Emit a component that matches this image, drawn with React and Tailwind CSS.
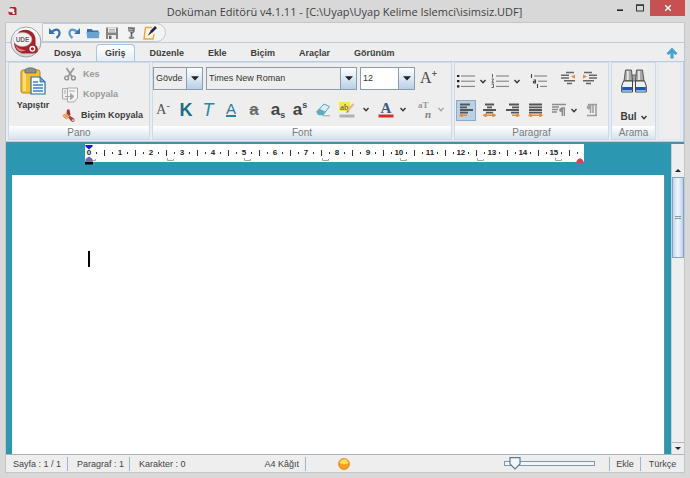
/**
 * Doküman Editörü: ana pencere, şerit menü, cetvel ve durum çubuğu.
 */

import React, { useState } from 'react';

const TABS = ['Dosya', 'Giriş', 'Düzenle', 'Ekle', 'Biçim', 'Araçlar', 'Görünüm'];
const CENTIMETERS = Array.from({ length: 16 }, (_, i) => i);
const TAB_STOPS = [0, 1, 2, 3, 4, 5, 6];

/* ---------- Ortak parçalar ---------- */

function Chevron({ muted }) {
  return (
    <svg viewBox="0 0 6 5" className="h-[5px] w-[6px] shrink-0" fill="none">
      <path d="M0.5 1 L3 3.7 L5.5 1" stroke={muted ? '#a5a5a5' : '#333'} strokeWidth="1.4" />
    </svg>
  );
}

function IconButton({ label, className = '', children }) {
  return (
    <button type="button" aria-label={label} title={label} className={`flex shrink-0 items-center justify-center ${className}`}>
      {children}
    </button>
  );
}

function Combo({ label, options, className = '', fieldClass = 'bg-[#eeeeee]' }) {
  return (
    <div className={`relative h-[23px] border border-[#8a9db0] ${className}`}>
      <select
        aria-label={label}
        className={`block h-full w-full appearance-none truncate pr-4 pl-[2px] text-[9px] leading-3 text-[#333] outline-none ${fieldClass}`}
      >
        {options.map((option) => (
          <option key={option}>{option}</option>
        ))}
      </select>
      <span className="pointer-events-none absolute inset-y-0 right-0 flex w-4 items-center justify-center border-l border-[#8a9db0] bg-linear-to-b from-[#fdfeff] via-[#dce8f4] to-[#b9cfe5]">
        <svg viewBox="0 0 8 5" className="h-[5px] w-2">
          <path d="M0 0.3 H8 L4 4.6 Z" fill="#222" />
        </svg>
      </span>
    </div>
  );
}

function Group({ title, className = '', children }) {
  return (
    <section aria-label={title} className={`flex shrink-0 flex-col border border-[#cddbe9] bg-[#eeeeee] ${className}`}>
      <div className="flex h-[63px] flex-col">{children}</div>
      <h2 className="h-[13px] bg-linear-to-b from-white to-[#d9e2ee] text-center text-[10px] leading-[13px] text-[#7b7b7b]">{title}</h2>
    </section>
  );
}

/* ---------- Üst kısım ---------- */

function TitleBar() {
  return (
    <header className="flex h-[22px] shrink-0 items-start pl-2">
      <svg viewBox="0 0 10 10" className="mt-[6px] h-[10px] w-[10px]">
        <path d="M2 1 H7 Q8.5 1 8.5 3 V9 H3 Q0.5 9 0.5 6.5 Z" fill="#b31f2c" />
        <ellipse cx="3.4" cy="4.2" rx="3" ry="2" fill="#f4e9e9" />
        <circle cx="5.6" cy="7" r="1.2" fill="#fff" />
      </svg>
      <h1 className="min-w-0 flex-1 truncate pl-[61px] text-center font-['Open_Sans','Noto_Sans',sans-serif] text-[11px] leading-6 text-[#3f3f3f]">
        Doküman Editörü v4.1.11 - [C:\Uyap\Uyap Kelime Islemci\isimsiz.UDF]
      </h1>
      <div className="flex pr-[5px]">
        <IconButton label="Simge durumuna küçült" className="h-4 w-5">
          <svg viewBox="0 0 8 8" className="h-2 w-2"><path d="M1 6.2 H7" stroke="#222" strokeWidth="1.6" /></svg>
        </IconButton>
        <IconButton label="Ekranı kapla" className="h-4 w-5">
          <svg viewBox="0 0 8 8" className="h-2 w-2">
            <rect x="0.5" y="1" width="7" height="6" fill="none" stroke="#333" />
            <path d="M0 1.2 H8" stroke="#333" strokeWidth="1.4" />
          </svg>
        </IconButton>
        <IconButton label="Kapat" className="h-4 w-[35px] bg-[#c75050]">
          <svg viewBox="0 0 8 8" className="h-2 w-2"><path d="M1.2 1.2 L6.8 6.8 M6.8 1.2 L1.2 6.8" stroke="#fff" strokeWidth="1.5" /></svg>
        </IconButton>
      </div>
    </header>
  );
}

function AppOrb() {
  return (
    <button type="button" aria-label="UDE" className="absolute top-[3px] left-1 z-10 h-8 w-8">
      <svg viewBox="0 0 32 32" className="h-8 w-8">
        <defs>
          <linearGradient id="orbFill" x1="0" y1="0" x2="0" y2="1">
            <stop offset="0" stopColor="#ffffff" />
            <stop offset="0.6" stopColor="#eceef0" />
            <stop offset="1" stopColor="#cfd3d8" />
          </linearGradient>
        </defs>
        <circle cx="16" cy="16" r="15" fill="url(#orbFill)" stroke="#98a1ac" />
        <path d="M9 5.5 Q16 2 22 6 Q25.5 9 25.5 14 V19 Q29 22 27.5 25.5 Q26 28 22 27.5 H12 Q4.5 25 4 17 Z" fill="#a5222b" />
        <path d="M5 19 Q9 24 16 24 Q12 26.5 8.5 24.5 Q6 22.5 5 19 Z" fill="#d8878b" />
        <ellipse cx="12.5" cy="13.5" rx="9.3" ry="7" fill="#f6f3f3" stroke="#c5b5b6" strokeWidth="0.6" />
        <text x="12.5" y="16" textAnchor="middle" fontSize="6.5" fontWeight="bold" fill="#666" fontFamily="Liberation Sans, sans-serif">UDE</text>
        <circle cx="22.4" cy="22.8" r="2.3" fill="#a5222b" stroke="#fff" strokeWidth="1.4" />
      </svg>
    </button>
  );
}

function QuickAccess() {
  return (
    <div className="flex h-5 shrink-0 border-b border-[#c3cad2]">
      <div className="ml-9 flex items-center gap-[5px] rounded-r-full border border-[#c6c9cf] bg-[#f3f3f4] pr-2 pl-[5px]">
        <IconButton label="Geri al" className="h-[14px] w-[14px]">
          <svg viewBox="0 0 14 14" className="h-[14px] w-[14px]">
            <path d="M4 5.5 Q10 1.5 11.5 6 Q12 9.5 8.5 12" fill="none" stroke="#3572ae" strokeWidth="2.2" />
            <path d="M1 2 V8 H7 Z" fill="#3572ae" />
          </svg>
        </IconButton>
        <IconButton label="Yinele" className="h-[14px] w-[14px]">
          <svg viewBox="0 0 14 14" className="h-[14px] w-[14px]">
            <path d="M10 5.5 Q4 1.5 2.5 6 Q2 9.5 5.5 12" fill="none" stroke="#5a9acb" strokeWidth="2.2" />
            <path d="M13 2 V8 H7 Z" fill="#3572ae" />
          </svg>
        </IconButton>
        <IconButton label="Aç" className="h-[14px] w-[14px]">
          <svg viewBox="0 0 14 14" className="h-[14px] w-[14px]">
            <path d="M1 3 H5.5 L7 4.5 H12.5 V12 H1 Z" fill="#3f6f9e" />
            <path d="M0.5 6 H13.5 L12.8 12.3 H1.2 Z" fill="#6ba2d3" />
          </svg>
        </IconButton>
        <IconButton label="Kaydet" className="h-[14px] w-[14px]">
          <svg viewBox="0 0 14 14" className="h-[14px] w-[14px]">
            <path d="M1 1.5 H13 V13 H1 Z" fill="#858585" />
            <rect x="3" y="1.5" width="8" height="5" fill="#e9e9e9" />
            <path d="M4 3.5 H10 M4 5 H10" stroke="#999" strokeWidth="0.7" />
            <rect x="3" y="9" width="8" height="4" fill="#ededed" />
            <rect x="4" y="9.7" width="2.4" height="3.3" fill="#666" />
          </svg>
        </IconButton>
        <IconButton label="İmzala" className="h-[14px] w-[14px]">
          <svg viewBox="0 0 14 14" className="h-[14px] w-[14px]">
            <path d="M4 1 L11 1.5 L10.5 6 L8.5 7.5 L4.5 5.5 Z" fill="#707070" />
            <path d="M5 3 L9 4 M5 5 L9 6" stroke="#c9c9c9" strokeWidth="0.8" />
            <path d="M7.5 6 V11" stroke="#5a5a5a" strokeWidth="1.6" />
            <ellipse cx="7.5" cy="11.8" rx="3" ry="1.3" fill="#8a8a8a" />
          </svg>
        </IconButton>
        <IconButton label="Düzenle" className="h-[14px] w-[14px]">
          <svg viewBox="0 0 14 14" className="h-[14px] w-[14px]">
            <path d="M9 1.5 H2.5 L1 13 H10 L11 8" fill="#fff6e3" stroke="#eda546" strokeWidth="1.4" />
            <path d="M13 1 L8 6" stroke="#1f2547" strokeWidth="2.6" />
            <path d="M7.5 5 L9 6.8 L4.5 10 Z" fill="#333" />
          </svg>
        </IconButton>
      </div>
    </div>
  );
}

function TabBar({ active, onSelect }) {
  return (
    <nav className="flex h-[18px] shrink-0 items-end gap-[6px] pr-[5px] pl-[39px]">
      {TABS.map((tab) => (
        <button
          key={tab}
          type="button"
          onClick={() => onSelect(tab)}
          className={`h-[17px] px-2 text-[9px] leading-4 font-bold text-[#3c3c3c] ${
            tab === active
              ? 'rounded-t-sm border border-b-0 border-[#a9c4df] bg-linear-to-b from-white to-[#e6edf5]'
              : 'border border-b-0 border-transparent'
          }`}
        >
          {tab}
        </button>
      ))}
      <IconButton label="Şeridi gizle" className="ml-auto h-4 w-[14px]">
        <svg viewBox="0 0 12 12" className="h-3 w-3"><path d="M6 0.5 L11.5 6.5 L9.5 8 L7.6 6.3 V11.5 H4.4 V6.3 L2.5 8 L0.5 6.5 Z" fill="#46a3cd" /></svg>
      </IconButton>
    </nav>
  );
}

/* ---------- Şerit ---------- */

function ClipboardGroup() {
  return (
    <Group title="Pano" className="w-[142px]">
      <div className="flex h-full">
        <button type="button" className="flex w-12 shrink-0 flex-col items-center pt-1 text-[9px] leading-3 font-bold text-[#3c3c3c]">
          <svg viewBox="0 0 26 28" className="mb-1 h-7 w-[26px]">
            <rect x="1" y="3" width="19" height="23" rx="2" fill="#f4bf2b" stroke="#b98516" />
            <path d="M3 5 H6 V24 H3 Z" fill="#fbdc78" />
            <path d="M5 2.5 Q10.5 -1 16 2.5 V6 H5 Z" fill="#8d8d8d" stroke="#5a5a5a" strokeWidth="0.7" />
            <path d="M11 10 H20 L25 15 V27 H11 Z" fill="#f5faff" stroke="#2d6ba5" strokeWidth="1.2" />
            <path d="M20 10 V15 H25 Z" fill="#6ba6d8" stroke="#2d6ba5" strokeWidth="0.8" />
            <path d="M13 15 H18 M13 18 H23 M13 21 H23 M13 24 H23" stroke="#3c83c2" strokeWidth="1.6" />
          </svg>
          Yapıştır
        </button>
        <div className="flex flex-col pt-px text-[9px] font-bold text-[#3c3c3c]">
          <button type="button" className="flex h-[21px] items-center gap-[5px] pl-[5px] text-[#9a9a9a]">
            <svg viewBox="0 0 16 14" className="h-[14px] w-4">
              <path d="M4.5 1 L10 9.5 M12 1 L6 9.5" stroke="#9b9b9b" strokeWidth="1.8" />
              <circle cx="4.6" cy="11" r="1.9" fill="none" stroke="#8e8e8e" strokeWidth="1.4" />
              <circle cx="11.4" cy="11" r="1.9" fill="none" stroke="#8e8e8e" strokeWidth="1.4" />
            </svg>
            Kes
          </button>
          <button type="button" className="flex h-[21px] items-center gap-[5px] pl-[5px] text-[#9a9a9a]">
            <svg viewBox="0 0 16 16" className="h-4 w-4" fill="none" stroke="#aaa">
              <path d="M0.5 1.5 H9 V12 H0.5 Z" fill="#efefef" />
              <path d="M5.5 1 H15.5 V11 L12 15 H5.5 Z" fill="#f4f4f4" />
              <path d="M2 4 H4 M2 6 H4 M7 4 H13 M3 9.5 H9" />
              <path d="M8.5 6.5 L12 9.5 L8.5 12.5 Z" fill="#a3a3a3" />
            </svg>
            Kopyala
          </button>
          <button type="button" className="flex h-[21px] items-center gap-1 pl-1 whitespace-nowrap">
            <svg viewBox="0 0 16 14" className="h-[14px] w-4">
              <path d="M6 0.5 L8.5 0.5 L9.5 6 L7 7.5 L5.5 4 Z" fill="#a4312a" />
              <path d="M1 6 L5 4 L9 8 L5.5 10.5 Z" fill="#e9b27c" />
              <path d="M2 7 L5.5 10 M4 5.5 L7.5 9" stroke="#c97f55" strokeWidth="0.8" />
              <path d="M8.5 6.5 L13 9.5 Q14.5 12 12 13 Q10.5 13 7.5 9 Z" fill="#a9473a" />
              <circle cx="12" cy="11.2" r="0.9" fill="#f0dcd5" />
            </svg>
            Biçim Kopyala
          </button>
        </div>
      </div>
    </Group>
  );
}

function FontGroup() {
  return (
    <Group title="Font" className="w-[300px]">
      <div className="flex h-[30px] items-center gap-[3px]">
        <Combo label="Stil" options={['Gövde']} className="w-[50px]" />
        <Combo label="Yazı tipi" options={['Times New Roman']} className="w-[151px]" />
        <Combo label="Boyut" options={['12']} className="w-[55px]" fieldClass="bg-white" />
        <IconButton label="Yazı tipini büyüt" className="ml-[2px] font-['Liberation_Serif',serif] text-[16px] leading-5 text-[#444]">
          A<span className="-mt-2 text-[10px] leading-3 font-bold">+</span>
        </IconButton>
      </div>
      <div className="flex h-[33px] items-center pl-[3px]">
        <IconButton label="Yazı tipini küçült" className="w-[14px] font-['Liberation_Serif',serif] text-[14px] leading-5 text-[#555]">
          A<span className="-mt-2 text-[10px] leading-3">-</span>
        </IconButton>
        <IconButton label="Kalın" className="ml-[9px] w-[14px] text-[18px] leading-5 font-bold text-[#14708a]">K</IconButton>
        <IconButton label="İtalik" className="ml-2 w-[14px] text-[18px] leading-5 text-[#2b87a2] italic">T</IconButton>
        <IconButton label="Altı çizili" className="ml-[9px] w-[14px]">
          <span className="border-b-2 border-[#2b7f9c] text-[15px] leading-[13px] text-[#2b7f9c]">A</span>
        </IconButton>
        <IconButton label="Üstü çizili" className="ml-[9px] w-[14px] text-[17px] leading-5 font-bold text-[#6b6b6b] line-through">a</IconButton>
        <IconButton label="Alt simge" className="ml-2 w-[18px] text-[17px] leading-5 font-bold text-[#444]">
          a<span className="mt-3 text-[9px] leading-[9px]">s</span>
        </IconButton>
        <IconButton label="Üst simge" className="ml-1 w-[18px] text-[17px] leading-5 font-bold text-[#444]">
          a<span className="-mt-2 text-[9px] leading-[9px]">s</span>
        </IconButton>
        <IconButton label="Biçimi temizle" className="ml-[6px] w-4">
          <svg viewBox="0 0 16 14" className="h-[14px] w-4">
            <path d="M9 1 L14.5 3.5 L8 12 L1.5 9 Z" fill="#d9edf2" stroke="#5fa3b6" />
            <path d="M1.5 9 L4.5 5.8 L10.5 8.8 L8 12.5 L3 12 Z" fill="#5eacc0" />
            <path d="M8 12.8 H15" stroke="#8fa9b0" />
          </svg>
        </IconButton>
        <IconButton label="Vurgu rengi" className="ml-2 gap-2">
          <svg viewBox="0 0 16 18" className="h-[18px] w-4">
            <rect x="0" y="1" width="11" height="9" fill="#f6e945" />
            <text x="1" y="8.6" fontSize="9" fill="#444" fontFamily="Liberation Serif, serif">ab</text>
            <path d="M14.5 3 L8 10.5" stroke="#e2b88d" strokeWidth="2.2" />
            <path d="M8.8 9.5 L7 12 L9.8 11 Z" fill="#777" />
            <rect x="0.5" y="13.5" width="15" height="3" fill="#b1b1b1" />
          </svg>
          <Chevron />
        </IconButton>
        <IconButton label="Yazı rengi" className="ml-[9px] gap-[6px]">
          <svg viewBox="0 0 16 18" className="h-[18px] w-4">
            <text x="8" y="12" textAnchor="middle" fontSize="15" fontWeight="bold" fill="#3c5a80" fontFamily="Liberation Serif, serif">A</text>
            <rect x="0.5" y="13.5" width="15" height="3" fill="#d2302b" />
          </svg>
          <Chevron />
        </IconButton>
        <IconButton label="Metin efektleri" className="ml-[10px] gap-1">
          <svg viewBox="0 0 18 24" className="h-6 w-[18px]" fontFamily="Liberation Serif, serif" fontWeight="bold">
            <text x="2" y="10" fontSize="9" fill="#999">aT</text>
            <text x="9" y="20" fontSize="11" fontStyle="italic" fill="#808080">n</text>
          </svg>
          <Chevron muted />
        </IconButton>
      </div>
    </Group>
  );
}

function AlignIcon({ lines, arrow }) {
  return (
    <svg viewBox="0 0 15 14" className="h-[14px] w-[15px]" fill="none">
      <path d={lines} stroke="#555" strokeWidth="1.8" />
      <path d={arrow} stroke="#e38b3e" strokeWidth="1.5" />
    </svg>
  );
}

const ALIGNMENTS = [
  { label: 'Sola hizala', lines: 'M1 1.5 H11 M1 4.3 H8 M1 7 H14 M1 9.6 H9', arrow: 'M1 12.3 H8 M3.5 10.5 L1.2 12.3 L3.5 14' },
  { label: 'Ortala', lines: 'M3 1.5 H12 M5 4.3 H10 M1 7 H14 M4 9.6 H11', arrow: 'M2 12.3 H13 M4.5 10.5 L2 12.3 L4.5 14 M10.5 10.5 L13 12.3 L10.5 14' },
  { label: 'Sağa hizala', lines: 'M4 1.5 H14 M7 4.3 H14 M1 7 H14 M6 9.6 H14', arrow: 'M7 12.3 H14 M11.5 10.5 L13.8 12.3 L11.5 14' },
  { label: 'İki yana yasla', lines: 'M1 1.5 H14 M1 4.3 H14 M1 7 H14 M1 9.6 H14', arrow: 'M1 12.3 H14 M3.5 10.5 L1.2 12.3 L3.5 14 M11.5 10.5 L13.8 12.3 L11.5 14' },
];

function ParagraphGroup() {
  const [align, setAlign] = useState('Sola hizala');

  return (
    <Group title="Paragraf" className="w-[155px]">
      <div className="flex h-8 items-center pt-1 pl-[2px]">
        <IconButton label="Madde işaretleri" className="gap-[5px]">
          <svg viewBox="0 0 18 14" className="h-[14px] w-[18px]">
            <path d="M0 2 H2.4 M0 7.2 H2.4 M0 12.4 H2.4" stroke="#222" strokeWidth="2.2" />
            <path d="M4 2 H18 M4 7.2 H18 M4 12.4 H18" stroke="#777" />
          </svg>
          <Chevron />
        </IconButton>
        <IconButton label="Numaralandırma" className="ml-[5px] gap-[5px]">
          <svg viewBox="0 0 18 14" className="h-[14px] w-[18px]" fill="none">
            <path d="M1.5 0 V3.5 M0.5 5 H2.5 L1 8.3 H3 M0.5 10 H2.5 V13.5 H0.5" stroke="#555" strokeWidth="0.9" />
            <path d="M5 2 H18 M5 7.2 H18 M5 12.4 H18" stroke="#777" />
          </svg>
          <Chevron />
        </IconButton>
        <IconButton label="Çok düzeyli liste" className="ml-[10px]">
          <svg viewBox="0 0 18 14" className="h-[14px] w-[18px]" fill="none">
            <path d="M1.5 0 V4 M3.5 6 H5.5 V9 H3.5 V7.5 H5 M7.5 10 V14" stroke="#444" strokeWidth="1.1" />
            <path d="M4 2 H17 M8 7.2 H17 M10 12.4 H17" stroke="#777" />
          </svg>
        </IconButton>
        <IconButton label="Girintiyi azalt" className="ml-3 pb-[6px]">
          <svg viewBox="0 0 16 14" className="h-[14px] w-4" fill="none">
            <path d="M6 1.5 H14 M1 4.2 H9 M1 7 H9 M4 9.8 H15 M7 12.5 H12" stroke="#666" strokeWidth="1.6" />
            <path d="M15 3.5 L11 5.6 L15 7.7 Z" fill="#e58b4a" />
          </svg>
        </IconButton>
        <IconButton label="Girintiyi artır" className="ml-[6px] pb-[6px]">
          <svg viewBox="0 0 16 14" className="h-[14px] w-4" fill="none">
            <path d="M2 1.5 H10 M7 4.2 H15 M7 7 H15 M1 9.8 H12 M4 12.5 H9" stroke="#666" strokeWidth="1.6" />
            <path d="M1 3.5 L5 5.6 L1 7.7 Z" fill="#e58b4a" />
          </svg>
        </IconButton>
      </div>
      <div className="flex h-[31px] items-center pb-px pl-px">
        <div className="flex gap-[3px]">
          {ALIGNMENTS.map(({ label, lines, arrow }) => (
            <button
              key={label}
              type="button"
              aria-label={label}
              aria-pressed={align === label}
              onClick={() => setAlign(label)}
              className={`flex h-[21px] w-5 items-center justify-center border ${
                align === label ? 'border-[#8fa9c4] bg-[#b9d0e5]' : 'border-transparent'
              }`}
            >
              <AlignIcon lines={lines} arrow={arrow} />
            </button>
          ))}
        </div>
        <IconButton label="Satır aralığı" className="ml-[6px] gap-1">
          <svg viewBox="0 0 16 14" className="h-[14px] w-4" fill="none">
            <path d="M1 1.5 H15 M1 4 H8 M1 6.5 H7 M1 9 H6" stroke="#8c8c8c" strokeWidth="1.6" />
            <path d="M14 5 H10 M11.3 5 V13 M13.3 5 V13" stroke="#8c8c8c" strokeWidth="1.4" />
            <circle cx="10" cy="7" r="1.9" fill="#8c8c8c" />
          </svg>
          <Chevron />
        </IconButton>
        <IconButton label="Paragraf işaretleri" className="ml-2">
          <svg viewBox="0 0 14 14" className="h-[14px] w-[14px]" fill="none">
            <path d="M3 1.5 H12 M5.5 2 V10 M8 2 V10 M11 2 V12 M2 12.5 H12" stroke="#9a9a9a" strokeWidth="1.5" />
            <circle cx="4" cy="4.2" r="2.2" fill="#a2a2a2" />
          </svg>
        </IconButton>
      </div>
    </Group>
  );
}

function SearchGroup() {
  return (
    <Group title="Arama" className="w-[45px]">
      <button type="button" className="flex flex-col items-center pt-[6px] text-[10px] leading-3 font-bold text-[#3c3c3c]">
        <svg viewBox="0 0 26 24" className="mb-[18px] h-6 w-[26px]">
          <path d="M10 6 H16 V12 H10 Z" fill="#a5a5a5" stroke="#555" strokeWidth="0.8" />
          <path d="M4.5 1 H10.5 L11.5 12 H3 Z" fill="#a9a9a9" stroke="#4d4d4d" strokeWidth="0.9" />
          <path d="M21.5 1 H15.5 L14.5 12 H23 Z" fill="#a9a9a9" stroke="#4d4d4d" strokeWidth="0.9" />
          <path d="M6.8 2 V11 M18 2 V11" stroke="#e9e9e9" strokeWidth="1.8" />
          <path d="M2.5 12 H11.5 V23 H0.7 V17 Z" fill="#eef0f2" stroke="#444" />
          <path d="M23.5 12 H14.5 V23 H25.3 V17 Z" fill="#eef0f2" stroke="#444" />
          <path d="M1.2 18 H11 V22 H1.2 Z M15 18 H24.8 V22 H15 Z" fill="#1d55b5" />
          <path d="M1.2 21 H11 V22.6 H1.2 Z M15 21 H24.8 V22.6 H15 Z" fill="#86b6e6" />
        </svg>
        <span className="flex items-center gap-1">
          Bul <Chevron />
        </span>
      </button>
    </Group>
  );
}

function Ribbon() {
  return (
    <div className="flex shrink-0 gap-[2px] overflow-hidden border-y border-r border-[#b9cce0] bg-[#e9edf2] px-[2px] pb-px">
      <ClipboardGroup />
      <FontGroup />
      <ParagraphGroup />
      <SearchGroup />
      <div className="flex-1 border border-[#dfe6ee] bg-[#eeeeee]" />
    </div>
  );
}

/* ---------- Belge alanı ---------- */

function Ruler() {
  return (
    <div className="relative ml-[73px] h-[18px] w-fit bg-white pr-[3px]">
      <div className="flex h-[14px] items-center pt-[3px]">
        {CENTIMETERS.map((cm) => (
          <div key={cm} className="grid w-[31px] grid-cols-4 items-center justify-items-center text-[8px] leading-[10px] font-bold text-[#222]">
            <span>{cm}</span>
            <i className="h-[2px] w-px bg-[#333]" />
            <i className="h-[6px] w-px bg-[#333]" />
            <i className="h-[2px] w-px bg-[#333]" />
          </div>
        ))}
      </div>
      <div className="flex justify-between pr-[19px] pl-1">
        {TAB_STOPS.map((stop) => (
          <svg key={stop} viewBox="0 0 7 3" className="h-[3px] w-[7px]">
            <path d="M0.5 0 V2.5 H6.5 V1" fill="none" stroke="#9a9a9a" strokeWidth="0.9" />
          </svg>
        ))}
      </div>
      <svg viewBox="0 0 8 20" className="absolute top-px left-0 h-5 w-2">
        <path d="M0.5 0 H7.5 V1.5 L4 4.5 L0.5 1.5 Z" fill="#1717c4" />
        <path d="M0.5 16 V14 L4 11.5 L7.5 14 V16 Z" fill="#6f63ad" />
        <rect x="0" y="16.5" width="8" height="3" fill="#000" />
      </svg>
      <svg viewBox="0 0 8 5" className="absolute right-0 -bottom-px h-[5px] w-2">
        <path d="M0.5 5 V3 Q4 -2.5 7.5 3 V5 Z" fill="#cf4655" />
      </svg>
    </div>
  );
}

function ScrollBar() {
  return (
    <div className="flex w-[13px] shrink-0 flex-col border-l border-[#c4d0dc] bg-[#eeeeee]">
      <IconButton label="Yukarı kaydır" className="mt-5 h-[13px]">
        <svg viewBox="0 0 6 3" className="h-[3px] w-[6px]"><path d="M0 3 L3 0 L6 3 Z" fill="#222" /></svg>
      </IconButton>
      <div className="flex h-[81px] flex-col items-center justify-center gap-px border border-[#86a5c4] bg-linear-to-r from-[#c3d6ea] via-[#f2f8fe] to-[#b9cfe6]">
        <i className="h-px w-[6px] bg-[#7f97ae]" />
        <i className="h-px w-[6px] bg-[#7f97ae]" />
      </div>
      <IconButton label="Aşağı kaydır" className="mt-auto h-3 border-t border-[#a7b9ca]">
        <svg viewBox="0 0 6 3" className="h-[3px] w-[6px]"><path d="M0 0 L3 3 L6 0 Z" fill="#222" /></svg>
      </IconButton>
    </div>
  );
}

function DocumentArea() {
  return (
    <main className="flex min-h-0 flex-1 border-t-2 border-[#44929f]">
      <div className="flex min-w-0 flex-1 flex-col bg-[#2c97b0] pr-[6px] pl-[6px]">
        <Ruler />
        <div className="relative mt-[13px] min-h-0 flex-1 border-r border-[#6d8d98] bg-white">
          <textarea
            aria-label="Belge metni"
            className="block h-full w-full resize-none px-[78px] py-[76px] font-['Liberation_Serif',serif] text-base caret-transparent outline-none"
          />
          <i className="pointer-events-none absolute top-[76px] left-[76px] h-4 w-[2px] bg-black" />
        </div>
      </div>
      <ScrollBar />
    </main>
  );
}

/* ---------- Durum çubuğu ---------- */

function ZoomSlider() {
  const [zoom, setZoom] = useState(6);

  return (
    <div className="relative h-[13px] w-[91px]">
      <i className="absolute inset-x-0 top-1 h-[5px] border border-[#8396ab] bg-[#f3f6f9]" />
      <svg
        viewBox="0 0 12 13"
        className="absolute top-0 h-[13px] w-3"
        style={{ left: `${(zoom / 100) * 79}px` }}
      >
        <path d="M1 0.7 H11 V7 L6 12 L1 7 Z" fill="#f2f7fc" stroke="#5c7895" strokeWidth="1.2" />
      </svg>
      <input
        type="range"
        aria-label="Yakınlaştırma"
        value={zoom}
        onChange={(event) => setZoom(Number(event.target.value))}
        className="absolute inset-0 m-0 h-full w-full opacity-0"
      />
    </div>
  );
}

function StatusBar() {
  return (
    <footer className="flex h-[18px] shrink-0 items-center border-t border-[#a3b5bd] bg-[#eeeeee] text-[9px] leading-[14px] whitespace-nowrap text-[#444]">
      <span className="w-[62px] border-r border-[#a5b4c4] pl-[7px]">Sayfa : 1 / 1</span>
      <span className="w-[62px] border-r border-[#a5b4c4] pl-[9px]">Paragraf : 1</span>
      <span className="flex w-[176px] justify-between border-r border-[#a5b4c4] pr-[6px] pl-[9px]">
        <span>Karakter : 0</span>
        <span>A4 Kâğıt</span>
      </span>
      <svg viewBox="0 0 12 12" className="ml-8 h-3 w-3">
        <circle cx="6" cy="6" r="5.5" fill="#f4a11d" stroke="#cf7d14" strokeWidth="0.7" />
        <path d="M1.5 5 Q3 1 7 1.3 Q10 2 10.5 5 Q6 7.5 1.5 5 Z" fill="#fbdc5a" />
      </svg>
      <div className="ml-auto pr-[14px] pb-px">
        <ZoomSlider />
      </div>
      <span className="w-8 border-x border-[#a5b4c4] text-center">Ekle</span>
      <span className="w-[43px] text-center">Türkçe</span>
    </footer>
  );
}

function App() {
  const [activeTab, setActiveTab] = useState('Giriş');

  return (
    <div className="flex h-screen flex-col bg-[#d8d8d8] font-['Liberation_Sans',sans-serif]">
      <TitleBar />
      <div className="relative mr-[5px] mb-[5px] ml-[5px] flex min-h-0 flex-1 flex-col border border-[#c2c7cc] bg-[#eeeeee]">
        <AppOrb />
        <QuickAccess />
        <TabBar active={activeTab} onSelect={setActiveTab} />
        <Ribbon />
        <DocumentArea />
        <StatusBar />
      </div>
    </div>
  );
}

export default App;
